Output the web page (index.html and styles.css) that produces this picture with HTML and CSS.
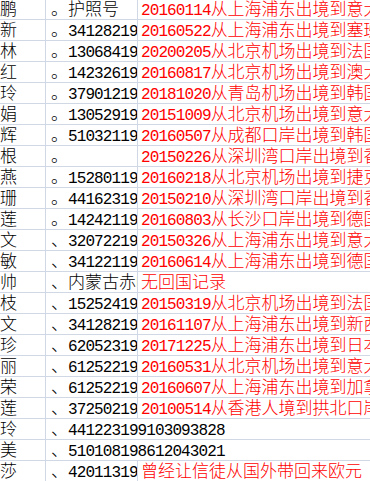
FILE: index.html
```html
<!DOCTYPE html>
<html lang="zh-CN">
<head>
<meta charset="utf-8">
<title>Sheet</title>
<link rel="stylesheet" href="styles.css">
</head>
<body>
<div class="sheet">
  <div class="row"><div class="cell name">鹏</div><div class="cell id">。护照号</div><div class="cell note"><span class="d">20160114</span>从上海浦东出境到意大利</div></div>
  <div class="row"><div class="cell name">新</div><div class="cell id">。<span class="d">341282199105120034</span></div><div class="cell note"><span class="d">20160522</span>从上海浦东出境到塞班岛</div></div>
  <div class="row"><div class="cell name">林</div><div class="cell id">。<span class="d">130684199003215627</span></div><div class="cell note"><span class="d">20200205</span>从北京机场出境到法国</div></div>
  <div class="row"><div class="cell name">红</div><div class="cell id">。<span class="d">142326198807140022</span></div><div class="cell note"><span class="d">20160817</span>从北京机场出境到澳大利亚</div></div>
  <div class="row"><div class="cell name">玲</div><div class="cell id">。<span class="d">379012198611250041</span></div><div class="cell note"><span class="d">20181020</span>从青岛机场出境到韩国</div></div>
  <div class="row"><div class="cell name">娟</div><div class="cell id">。<span class="d">130529198902180026</span></div><div class="cell note"><span class="d">20151009</span>从北京机场出境到意大利</div></div>
  <div class="row"><div class="cell name">辉</div><div class="cell id">。<span class="d">510321198412030017</span></div><div class="cell note"><span class="d">20160507</span>从成都口岸出境到韩国</div></div>
  <div class="row"><div class="cell name">根</div><div class="cell id">。</div><div class="cell note"><span class="d">20150226</span>从深圳湾口岸出境到香港</div></div>
  <div class="row"><div class="cell name">燕</div><div class="cell id">。<span class="d">152801199206110048</span></div><div class="cell note"><span class="d">20160218</span>从北京机场出境到捷克</div></div>
  <div class="row"><div class="cell name">珊</div><div class="cell id">。<span class="d">441623199308240067</span></div><div class="cell note"><span class="d">20150210</span>从深圳湾口岸出境到香港</div></div>
  <div class="row"><div class="cell name">莲</div><div class="cell id">。<span class="d">142421198710050083</span></div><div class="cell note"><span class="d">20160803</span>从长沙口岸出境到德国</div></div>
  <div class="row"><div class="cell name">文</div><div class="cell id">、<span class="d">320722199001160039</span></div><div class="cell note"><span class="d">20150326</span>从上海浦东出境到意大利</div></div>
  <div class="row"><div class="cell name">敏</div><div class="cell id">、<span class="d">341221198903270045</span></div><div class="cell note"><span class="d">20160614</span>从上海浦东出境到德国</div></div>
  <div class="row"><div class="cell name">帅</div><div class="cell id">、内蒙古赤峰</div><div class="cell note">无回国记录</div></div>
  <div class="row"><div class="cell name">枝</div><div class="cell id">、<span class="d">152524199105090028</span></div><div class="cell note"><span class="d">20150319</span>从北京机场出境到法国</div></div>
  <div class="row"><div class="cell name">文</div><div class="cell id">、<span class="d">341282199407220051</span></div><div class="cell note"><span class="d">20161107</span>从上海浦东出境到新西兰</div></div>
  <div class="row"><div class="cell name">珍</div><div class="cell id">、<span class="d">620523198808130024</span></div><div class="cell note"><span class="d">20171225</span>从上海浦东出境到日本</div></div>
  <div class="row"><div class="cell name">丽</div><div class="cell id">、<span class="d">612522199012020047</span></div><div class="cell note"><span class="d">20160531</span>从北京机场出境到意大利</div></div>
  <div class="row"><div class="cell name">荣</div><div class="cell id">、<span class="d">612522198604190013</span></div><div class="cell note"><span class="d">20160607</span>从上海浦东出境到加拿大</div></div>
  <div class="row"><div class="cell name">莲</div><div class="cell id">、<span class="d">372502199211280066</span></div><div class="cell note"><span class="d">20100514</span>从香港人境到拱北口岸</div></div>
  <div class="row"><div class="cell name">玲</div><div class="cell id wide">、<span class="d">441223199103093828</span></div></div>
  <div class="row"><div class="cell name">美</div><div class="cell id wide">、<span class="d">510108198612043021</span></div></div>
  <div class="row"><div class="cell name">莎</div><div class="cell id">、<span class="d">420113198709150032</span></div><div class="cell note">曾经让信徒从国外带回来欧元</div></div>
</div>
</body>
</html>
```

FILE: styles.css
```css
html, body {
  margin: 0;
  padding: 0;
  background: #ffffff;
  overflow: hidden;
}

.sheet {
  margin-top: -1px;
  width: 370px;
  font-family: "Noto Sans CJK SC", sans-serif;
  font-size: 17px;
  font-weight: 300;
  letter-spacing: 0;
  color: #000000;
}

.row {
  display: grid;
  grid-template-columns: 46px 92px 1fr;
  height: 21px;
}

.cell {
  box-sizing: border-box;
  height: 21px;
  border-bottom: 1px solid #d0d7e5;
  border-right: 1px solid #d0d7e5;
  white-space: nowrap;
  overflow: hidden;
  line-height: 17px;
}

.name {
  padding-left: 0;
}

.id {
  padding-left: 5px;
}

.id.wide {
  grid-column: span 2;
  border-right: none;
}

.note {
  padding-left: 3px;
  color: #ff0000;
  border-right: none;
}

.d {
  font-family: "Liberation Mono", monospace;
  font-size: 16px;
  font-weight: 400;
  letter-spacing: -0.9px;
}
```
